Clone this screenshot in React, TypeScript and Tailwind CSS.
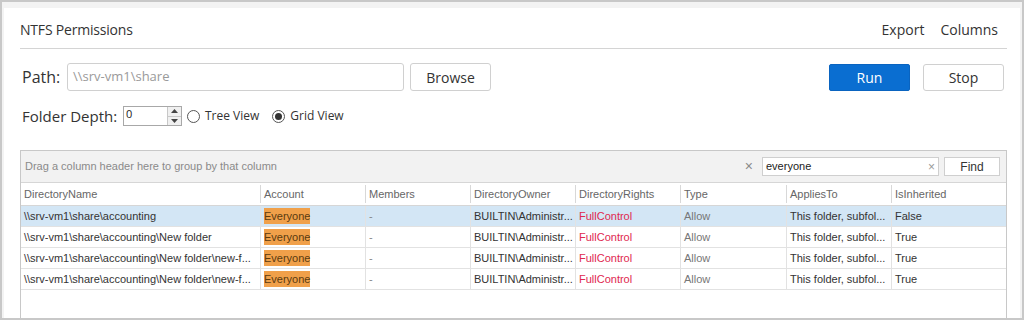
import React from "react";

const cols = [
  { name: "DirectoryName", w: "w-[240px]" },
  { name: "Account", w: "w-[105px]" },
  { name: "Members", w: "w-[105px]" },
  { name: "DirectoryOwner", w: "w-[105px]" },
  { name: "DirectoryRights", w: "w-[105px]" },
  { name: "Type", w: "w-[106px]" },
  { name: "AppliesTo", w: "w-[105px]" },
  { name: "IsInherited", w: "flex-1" },
];

const rows = [
  { dir: "\\\\srv-vm1\\share\\accounting", inh: "False", sel: true },
  { dir: "\\\\srv-vm1\\share\\accounting\\New folder", inh: "True", sel: false },
  { dir: "\\\\srv-vm1\\share\\accounting\\New folder\\new-f...", inh: "True", sel: false },
  { dir: "\\\\srv-vm1\\share\\accounting\\New folder\\new-f...", inh: "True", sel: false },
];

function Cell({ w, children, className = "" }: { w: string; children: React.ReactNode; className?: string }) {
  return (
    <div className={`${w} shrink-0 h-full flex items-center px-[3px] border-r border-[#e2e2e2] overflow-hidden whitespace-nowrap ${className}`}>
      {children}
    </div>
  );
}

export default function App() {
  return (
    <div
      className="w-[1024px] h-[320px] overflow-hidden bg-[#f3f3f3] border-2 border-[#c8c8c8] pt-[6px] px-[2px]"
      style={{ fontFamily: '"Open Sans", "Noto Sans", sans-serif' }}
    >
      <div className="h-full bg-white pl-[16px] pr-[13px] text-[#333]">
        {/* Header */}
        <div className="h-[41px] flex items-center justify-between border-b border-[#d4d4d4] pt-[3px]">
          <span className="text-[14px] tracking-[-0.2px] text-[#333]">NTFS Permissions</span>
          <div className="flex gap-[16px] text-[14px] pr-[9px] text-[#333]">
            <span>Export</span>
            <span>Columns</span>
          </div>
        </div>

        {/* Path row */}
        <div className="flex items-center mt-[14px] h-[28px]">
          <span className="text-[16px] w-[47px] pl-[2px] text-[#333]">Path:</span>
          <div className="w-[337px] h-[28px] border border-[#d0d0d0] rounded-[3px] flex items-center px-[5px] text-[13px] text-[#9a9a9a]">
            \\srv-vm1\share
          </div>
          <button className="ml-[6px] w-[81px] h-[28px] border border-[#d0d0d0] rounded-[3px] text-[14px] text-[#333] bg-white">
            Browse
          </button>
          <div className="flex-1" />
          <button className="w-[81px] h-[27px] bg-[#0a6ed1] text-white text-[14px] rounded-[2px] border border-[#0a64c0]">
            Run
          </button>
          <button className="ml-[13px] w-[81px] h-[27px] bg-white text-[#333] text-[14px] rounded-[3px] border border-[#d0d0d0] mr-[3px]">
            Stop
          </button>
        </div>

        {/* Folder depth row */}
        <div className="flex items-center mt-[15px] h-[20px]">
          <span className="text-[15px] w-[103px] shrink-0 pl-[2px] whitespace-nowrap text-[#333]">Folder Depth:</span>
          <div className="w-[59px] h-[20px] border border-[#a8a8a8] flex items-stretch bg-white">
            <span className="flex-1 text-[11px] pl-[2px] leading-[14px] text-[#222]">0</span>
            <div className="w-[14px] flex flex-col border-l border-[#c8c8c8] bg-[#f0f0f0]">
              <div className="flex-1 flex items-center justify-center border-b border-[#c8c8c8]">
                <svg width="7" height="4" viewBox="0 0 7 4"><path d="M0 4 L3.5 0 L7 4 Z" fill="#444" /></svg>
              </div>
              <div className="flex-1 flex items-center justify-center">
                <svg width="7" height="4" viewBox="0 0 7 4"><path d="M0 0 L3.5 4 L7 0 Z" fill="#444" /></svg>
              </div>
            </div>
          </div>
          <div className="ml-[5px] flex items-center gap-[5px]">
            <span className="w-[13px] h-[13px] rounded-full border border-[#555] bg-white" />
            <span className="text-[12px] text-[#333]">Tree View</span>
          </div>
          <div className="ml-[13px] flex items-center gap-[5px]">
            <span className="w-[13px] h-[13px] rounded-full border border-[#555] bg-white flex items-center justify-center">
              <span className="w-[7px] h-[7px] rounded-full bg-[#333]" />
            </span>
            <span className="text-[12px] text-[#333]">Grid View</span>
          </div>
        </div>

        {/* Grid */}
        <div
          className="mt-[24px] border border-[#c8c8c8] h-[200px] text-[11px]"
          style={{ fontFamily: '"Liberation Sans", Arial, sans-serif' }}
        >
          <div className="h-[32px] bg-[#f2f2f2] border-b border-[#d6d6d6] flex items-center pl-[4px] pr-[6px]">
            <span className="text-[#8a8a8a]">Drag a column header here to group by that column</span>
            <div className="flex-1" />
            <span className="text-[#8a8a8a] text-[14px] mr-[9px]">×</span>
            <div className="w-[177px] h-[19px] bg-white border border-[#cfcfcf] flex items-center justify-between px-[3px]">
              <span className="text-[#222]">everyone</span>
              <span className="text-[#9a9a9a] text-[12px]">×</span>
            </div>
            <button className="ml-[5px] w-[56px] h-[19px] bg-white border border-[#cfcfcf] text-[#333] text-[12px]">Find</button>
          </div>
          <div className="h-[23px] flex border-b border-[#d6d6d6] text-[#666] py-[2px]">
            {cols.map((c, i) => (
              <div
                key={c.name}
                className={`${c.w} shrink-0 h-full flex items-center px-[3px] ${i < cols.length - 1 ? "border-r border-[#d8d8d8]" : ""}`}
              >
                {c.name}
              </div>
            ))}
          </div>
          {rows.map((r, i) => (
            <div
              key={i}
              className={`h-[21px] flex border-b border-[#e2e2e2] ${r.sel ? "bg-[#d3e6f5]" : "bg-white"}`}
            >
              <Cell w={cols[0].w} className="text-[#333]">{r.dir}</Cell>
              <Cell w={cols[1].w}>
                <span className="bg-[#f0a04a] text-[#5a3a10]">Everyone</span>
              </Cell>
              <Cell w={cols[2].w} className="text-[#888]">-</Cell>
              <Cell w={cols[3].w} className="text-[#333]">BUILTIN\Administr...</Cell>
              <Cell w={cols[4].w} className="text-[#e0284f]">FullControl</Cell>
              <Cell w={cols[5].w} className="text-[#777]">Allow</Cell>
              <Cell w={cols[6].w} className="text-[#333]">This folder, subfol...</Cell>
              <div className="flex-1 h-full flex items-center px-[3px] text-[#333]">{r.inh}</div>
            </div>
          ))}
        </div>
      </div>
    </div>
  );
}
